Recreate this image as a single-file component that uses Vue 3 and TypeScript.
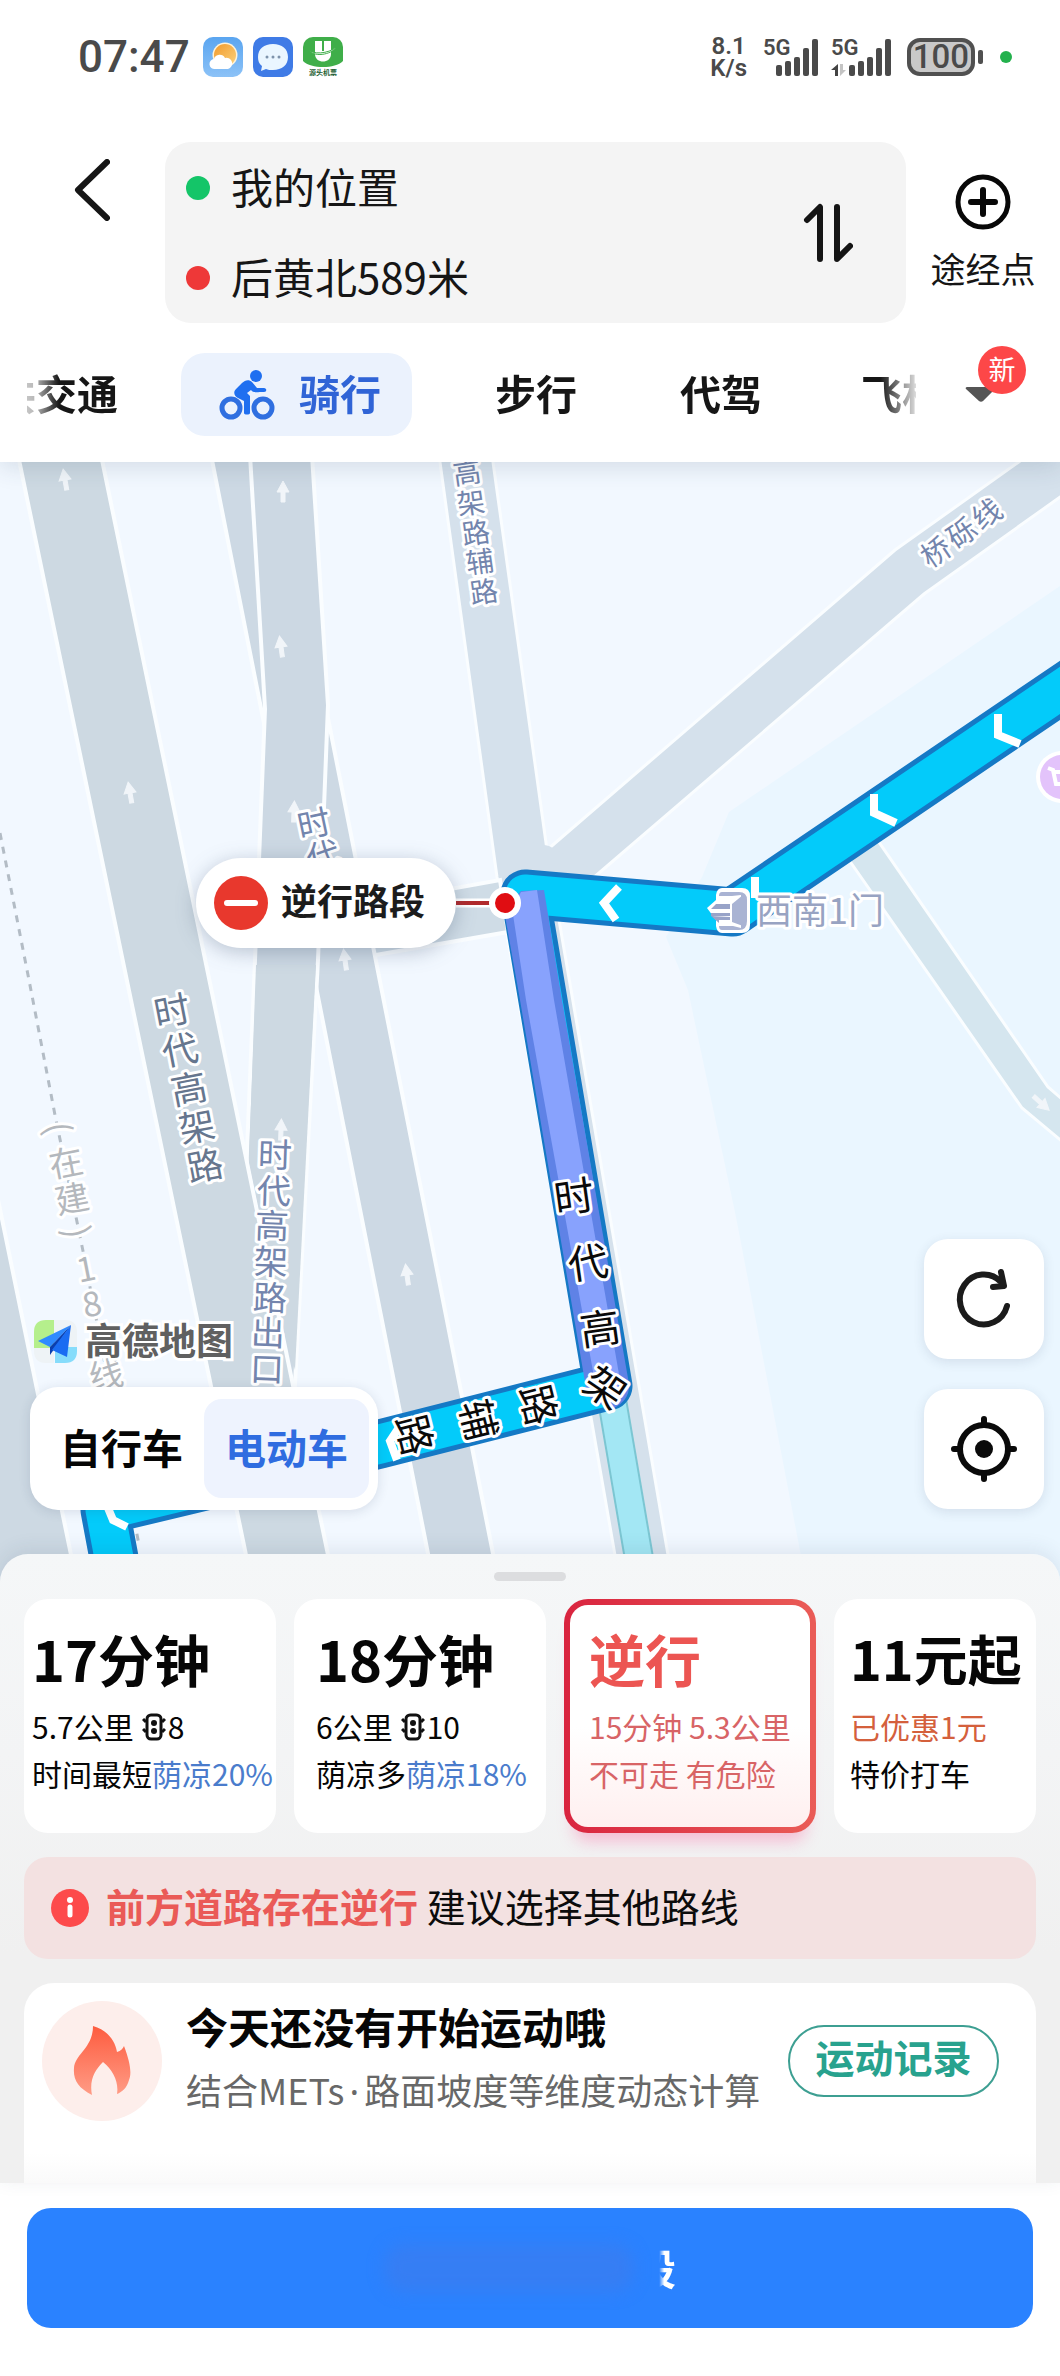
<script setup lang="ts">
import { ref } from 'vue'

interface Glyph {
  t: string
  x: number
  y: number
  r: number
}

interface Label {
  kind: string
  size: number
  glyphs: Glyph[]
}

const spread = (
  text: string,
  from: [number, number],
  to: [number, number],
  r: number,
): Glyph[] => {
  const chars = Array.from(text)
  const n = Math.max(chars.length - 1, 1)
  return chars.map((t, i) => ({
    t,
    x: Math.round(from[0] + ((to[0] - from[0]) * i) / n),
    y: Math.round(from[1] + ((to[1] - from[1]) * i) / n),
    r,
  }))
}

const labels: Label[] = [
  { kind: 'side', size: 28, glyphs: spread('高架路辅路', [467, 473], [484, 592], -8) },
  { kind: 'side', size: 29, glyphs: spread('桥砾线', [936, 552], [987, 514], -34) },
  { kind: 'side', size: 33, glyphs: spread('时代', [314, 824], [323, 856], -12) },
  { kind: 'main', size: 36, glyphs: spread('时代高架路', [172, 1011], [205, 1166], -11) },
  { kind: 'side', size: 34, glyphs: spread('时代高架路出口', [275, 1155], [267, 1369], 2) },
  {
    kind: 'planned',
    size: 34,
    glyphs: [
      { t: '(', x: 58, y: 1128, r: 79 },
      { t: '在', x: 66, y: 1163, r: -11 },
      { t: '建', x: 72, y: 1199, r: -11 },
      { t: ')', x: 77, y: 1232, r: 79 },
      { t: '1', x: 86, y: 1269, r: -11 },
      { t: '8', x: 92, y: 1304, r: -11 },
      { t: '线', x: 106, y: 1375, r: -11 },
    ],
  },
  {
    kind: 'route',
    size: 40,
    glyphs: [
      { t: '时', x: 574, y: 1197, r: -8 },
      { t: '代', x: 588, y: 1263, r: -8 },
      { t: '高', x: 600, y: 1329, r: -8 },
      { t: '架', x: 605, y: 1388, r: 34 },
      { t: '路', x: 538, y: 1405, r: 76 },
      { t: '辅', x: 478, y: 1420, r: 76 },
      { t: '路', x: 414, y: 1435, r: 76 },
    ],
  },
]

const arrows: [number, number, number][] = [
  [65, 480, -10],
  [283, 492, 0],
  [281, 647, -8],
  [130, 793, -10],
  [294, 812, 2],
  [345, 960, -8],
  [281, 1130, 2],
  [407, 1275, -8],
  [1041, 1103, 132],
]

const tabs = ['骑行', '步行', '代驾']
const activeTab = ref('骑行')
const vehicles = ['自行车', '电动车']
const vehicle = ref('电动车')
const bars = [11, 15, 19, 28, 37]

interface Plan {
  id: string
  title: string
  line: string
  lights?: string
  note: string
  shade?: string
}

const plans: Plan[] = [
  { id: 'fast', title: '17分钟', line: '5.7公里', lights: '8', note: '时间最短', shade: '荫凉20%' },
  { id: 'shade', title: '18分钟', line: '6公里', lights: '10', note: '荫凉多', shade: '荫凉18%' },
  { id: 'wrong', title: '逆行', line: '15分钟 5.3公里', note: '不可走 有危险' },
  { id: 'taxi', title: '11元起', line: '已优惠1元', note: '特价打车' },
]
const plan = ref('wrong')
</script>

<template>
  <div class="page">
    <header class="top">
      <div class="status">
        <div class="status-left">
          <span class="clock">07:47</span>
          <svg class="app" viewBox="0 0 40 40" aria-hidden="true">
            <defs>
              <linearGradient id="sky" x1="0" y1="0" x2="0" y2="1">
                <stop offset="0" stop-color="#5aa5f0" />
                <stop offset="1" stop-color="#8cc2f7" />
              </linearGradient>
              <linearGradient id="sun" x1="0" y1="0" x2="1" y2="1">
                <stop offset="0" stop-color="#f19a2c" />
                <stop offset="1" stop-color="#fbd27c" />
              </linearGradient>
            </defs>
            <rect width="40" height="40" rx="10" fill="url(#sky)" />
            <circle cx="22" cy="18" r="12.500" fill="#fff3d8" />
            <circle cx="22" cy="18" r="11" fill="url(#sun)" />
            <path d="M12 32a5 5 0 0 1-1-10 6 6 0 0 1 11-1 5.500 5.500 0 0 1 3 11z" fill="#fff" />
          </svg>
          <svg class="app" viewBox="0 0 40 40" aria-hidden="true">
            <rect width="40" height="40" rx="10" fill="#3f7be6" />
            <path d="M20 7c9 0 15 5 15 13s-6 13-15 13c-3 0-5 0-7-1l-5 2 1-5c-3-2-4-5-4-9C5 12 11 7 20 7z" fill="#eaf6ff" />
            <g fill="#7e93ab">
              <circle cx="14" cy="20" r="1.500" />
              <circle cx="20" cy="20" r="1.500" />
              <circle cx="26" cy="20" r="1.500" />
            </g>
          </svg>
          <svg class="app" viewBox="0 0 40 40" aria-hidden="true">
            <path d="M0 10A10 10 0 0 1 10 0h20a10 10 0 0 1 10 10v14c-8 8-32 8-40 0z" fill="#3fae49" />
            <path d="M12 4h7v10h2V4h7v13c0 10-16 10-16 0z" fill="#fff" />
            <path d="M6 12c2 6 20 5 27-2-4 8-24 11-27 2z" fill="#fff" stroke="#3fae49" stroke-width="1" />
            <text x="20" y="38" text-anchor="middle" class="app-name">源头机票</text>
          </svg>
        </div>
        <div class="status-right">
          <div class="speed">8.1<br />K/s</div>
          <div v-for="sim in 2" :key="sim" class="signal">
            <span class="gen">5G</span>
            <svg v-if="sim === 2" class="updown" viewBox="0 0 15 12" aria-hidden="true">
              <path d="M7 0v12H4V6H0z" fill="#444" />
              <path d="M9 0v12l6-6h-3V0z" fill="#c4c4c4" />
            </svg>
            <svg class="bars" viewBox="0 0 43 38" aria-hidden="true">
              <rect v-for="(h, i) in bars" :key="i" :x="i * 9" :y="38 - h" width="6" :height="h" rx="2" fill="#4a4a4a" />
            </svg>
          </div>
          <div class="battery"><span>100</span></div>
          <i class="live"></i>
        </div>
      </div>

      <div class="search-row">
        <button class="back" type="button" aria-label="返回">
          <svg width="36" height="62" viewBox="0 0 36 62">
            <path d="M33 3 4 31l29 28" fill="none" stroke="#161616" stroke-width="6" stroke-linecap="round" stroke-linejoin="round" />
          </svg>
        </button>
        <div class="places">
          <div class="place-list">
            <button class="place" type="button"><i class="dot start"></i><span>我的位置</span></button>
            <button class="place" type="button"><i class="dot end"></i><span>后黄北589米</span></button>
          </div>
          <button class="swap" type="button" aria-label="交换">
            <svg width="50" height="60" viewBox="0 0 50 60">
              <path d="M4 17 17 4v52M34 4v52l13-13" fill="none" stroke="#141414" stroke-width="6" stroke-linecap="round" stroke-linejoin="round" />
            </svg>
          </button>
        </div>
        <button class="via" type="button">
          <svg width="58" height="58" viewBox="0 0 58 58" aria-hidden="true">
            <circle cx="29" cy="29" r="25" fill="none" stroke="#080808" stroke-width="5" />
            <path d="M29 17v24M17 29h24" stroke="#080808" stroke-width="6" stroke-linecap="round" />
          </svg>
          途经点
        </button>
      </div>

      <div class="tab-row">
        <nav class="tabs">
          <button class="tab first" type="button"><span>公共交通</span></button>
          <button
            v-for="t in tabs"
            :key="t"
            class="tab"
            :class="{ on: t === activeTab }"
            type="button"
            @click="activeTab = t"
          >
            <svg v-if="t === '骑行'" width="56" height="50" viewBox="0 0 56 50" aria-hidden="true">
              <g fill="none" stroke="#2f6fe0" stroke-width="5">
                <circle cx="12" cy="38" r="9" />
                <circle cx="44" cy="38" r="9" />
              </g>
              <circle cx="37" cy="6" r="6" fill="#1f6ff0" />
              <path d="M33 12c-3-3-7-2-10 1l-6 6c-3 3-2 7 2 9l6 3v12c0 2 6 2 6 0V26l-3-3 4-3c2 3 5 2 13 2 3 0 3-4 0-4h-7z" fill="#1f6ff0" />
            </svg>
            <span>{{ t }}</span>
          </button>
          <button class="tab last" type="button"><span>飞机</span></button>
        </nav>
        <button class="more" type="button" aria-label="更多">
          <svg width="32" height="18" viewBox="0 0 32 18"><path d="M2 1h28c1 0 1 1 0 2L18 15c-1 1-3 1-4 0L1 3c-1-1 0-2 1-2z" fill="#555" /></svg>
          <span class="badge">新</span>
        </button>
      </div>
    </header>

    <main class="map">
      <svg class="canvas" viewBox="0 462 1060 1120" preserveAspectRatio="xMidYMid slice">
        <rect x="0" y="462" width="1060" height="1120" fill="#f2f8ff" />
        <path d="M1060 586 729 812 702 877 666 937 688 990 736 1217 806 1582H1060z" fill="#eaf6ff" />

        <g class="roads">
          <path class="light" d="M849 860 1022 1108 1070 1148V1106L1048 1087 876 838z" fill="#d5e6ef" />
          <path class="light" d="M547 850 895 550 1030 454H1070V490L924 594 599 873 560 905z" fill="#d5e1ec" />
          <path class="light" d="M439 455 497 877 620 1584H673L547 850 492 455z" fill="#d5e1ec" />
          <path class="bare" d="M522 840 549 846 597 872 560 900 510 890z" fill="#d5e1ec" />
          <path d="M350 907 500 880 508 932 370 956z" fill="#cfdce6" />
          <path d="M211 455H276L499 1584H434z" fill="#cdd9e4" />
          <path d="M-5 1185 77 1584H-5z" fill="#cdd9e3" />
          <path d="M250 455H312L328 705 318 960 293 1420 240 1420 247 1151 255 960 265 709z" fill="#ccd8e3" />
          <path d="M18 455H101L334 1584H252z" fill="#cdd9e2" />
          <path d="M249 1160 256 965 316 965 295 1370 284 1330z" class="bare" fill="#cdd9e2" />
        </g>

        <g class="oneway">
          <path
            v-for="([x, y, r], i) in arrows"
            :key="i"
            :transform="`translate(${x} ${y}) rotate(${r})`"
            d="M0-11 6 0H2V10H-2V0H-6z"
          />
        </g>
        <path d="M0 833 29 980 55 1115 83 1251 110 1390 139 1545" fill="none" stroke="#b3bcc5" stroke-width="3" stroke-dasharray="7 7" />

        <path d="M612 1400 643 1582" stroke="#7cc6d2" stroke-width="30" />
        <path d="M612 1400 643 1582" stroke="#a3e7f4" stroke-width="26" />
        <g fill="none" stroke-linejoin="round" stroke-linecap="round">
          <path d="M1090 670 733 912 525 894 608 1386 380 1444 105 1510 120 1590" stroke="#1579c5" stroke-width="49" />
          <path d="M1090 670 733 912 525 894 608 1386 380 1444 105 1510 120 1590" stroke="#03cbfa" stroke-width="39" />
        </g>
        <path d="M504 910 521 891 544 890 562 1000 629 1384Q630 1400 614 1408L592 1402 586 1388 520 1000z" fill="#5f82e6" />
        <path d="M512 908 521 892 537 890 554 1000 620 1380Q618 1392 608 1394L596 1388 526 1000z" fill="#88a2fd" />
        <g class="chevrons">
          <path d="M998 714V735L1020 744M874 794V813L896 823M755 877V898M619 887 604 903 616 920M108 1508 113 1520 127 1527M400 1426 390 1441 397 1460" />
        </g>

        <g v-for="(l, i) in labels" :key="i" :class="['lbl', l.kind]" :font-size="l.size">
          <text
            v-for="(g, k) in l.glyphs"
            :key="k"
            :transform="`translate(${g.x} ${g.y}) rotate(${g.r})`"
            dy=".36em"
          >{{ g.t }}</text>
        </g>

        <g>
          <path d="M722 888h20q8 0 8 8v29q0 8-8 8h-20q-5 0-6-7v-6l-9-12 9-8v-5q1-7 6-7z" fill="#fff" />
          <path d="M722 892h17q8 0 8 8v21q0 9-8 9h-17q-3 0-3-4h14l8 2v-33l-9 1h-13q0-4 3-4z" fill="#a9b3d3" />
          <path d="M732 904 743 895V926L732 922z" fill="#a9b3d3" />
          <path d="M711 909l5-5h14v5zM711 913h19v3h-19zM711 916l8 7v-3h11v-3z" fill="#98a3c8" />
          <text x="756" y="924" class="lbl poi">西南1门</text>
        </g>
        <circle cx="1062" cy="777" r="26" fill="#fff" />
        <circle cx="1062" cy="777" r="22" fill="#e3c3fb" />
        <path d="M1048 768l5 2 3 14h14M1054 772h14" fill="none" stroke="#fff" stroke-width="4" />

        <g class="callout">
          <path d="M456 903H500" stroke="#fff" stroke-width="9" />
          <path d="M456 903H500" stroke="#b02a2c" stroke-width="4" />
          <circle cx="505" cy="903" r="16" fill="#fff" />
          <circle cx="505" cy="903" r="10" fill="#e00d12" />
          <rect x="196" y="858" width="260" height="90" rx="45" fill="#fff" class="bubble" />
          <circle cx="241" cy="903" r="27" fill="#e8382d" />
          <path d="M227 903H255" stroke="#fff" stroke-width="6" stroke-linecap="round" />
          <text x="281" y="915">逆行路段</text>
        </g>

        <g class="brand">
          <path d="M34 1332q0-12 12-12h8v28H34z" fill="#b5ef8c" />
          <path d="M54 1320h11q12 0 12 12v15H54z" fill="#eef3f6" />
          <path d="M34 1348h20v15h-8q-12 0-12-12z" fill="#eef3f6" />
          <path d="M55 1347h22v4q0 12-12 12H55z" fill="#86dcfb" />
          <path d="M71 1325 38 1341 50 1347z" fill="#2f8bff" />
          <path d="M71 1325 50 1347 50 1355z" fill="#0b3fae" />
          <path d="M71 1325 52 1350 67 1357z" fill="#1a6cf2" />
          <text x="85" y="1355">高德地图</text>
        </g>
      </svg>

      <div class="vehicles">
        <button
          v-for="v in vehicles"
          :key="v"
          type="button"
          :class="{ on: v === vehicle }"
          @click="vehicle = v"
        >{{ v }}</button>
      </div>

      <div class="tools">
        <button type="button" aria-label="刷新">
          <svg width="64" height="64" viewBox="0 0 64 64">
            <path d="M55 39a24 25 0 1 1-6-24" fill="none" stroke="#1b1b1b" stroke-width="6" stroke-linecap="round" />
            <path d="M49 5l3 14-11 1" fill="none" stroke="#1b1b1b" stroke-width="6" stroke-linecap="round" stroke-linejoin="round" />
          </svg>
        </button>
        <button type="button" aria-label="定位">
          <svg width="70" height="70" viewBox="0 0 70 70">
            <circle cx="35" cy="35" r="24" fill="none" stroke="#0a0a0a" stroke-width="6" />
            <circle cx="35" cy="35" r="9" fill="#0a0a0a" />
            <path d="M35 5v6M35 59v6M5 35h6M59 35h6" stroke="#0a0a0a" stroke-width="6" stroke-linecap="round" />
          </svg>
        </button>
      </div>
    </main>

    <section class="sheet">
      <i class="handle"></i>
      <div class="plans">
        <button
          v-for="p in plans"
          :key="p.id"
          type="button"
          :class="['plan', p.id, { picked: p.id === plan }]"
          @click="plan = p.id"
        >
          <strong>{{ p.title }}</strong>
          <span class="line">
            {{ p.line }}
            <template v-if="p.lights">
              <svg width="24" height="28" viewBox="0 0 24 28" aria-hidden="true">
                <rect x="5" y="2" width="14" height="24" rx="4" fill="none" stroke="#111" stroke-width="3" />
                <circle cx="12" cy="10" r="3" fill="#111" />
                <circle cx="12" cy="18" r="3" fill="#111" />
                <path d="M1 6l3 3M1 16l3 3M23 6l-3 3M23 16l-3 3" stroke="#111" stroke-width="3" />
              </svg>{{ p.lights }}
            </template>
          </span>
          <span class="line note">{{ p.note }}<em v-if="p.shade">{{ p.shade }}</em></span>
        </button>
      </div>

      <div class="alert" role="alert">
        <svg width="40" height="40" viewBox="0 0 40 40" aria-hidden="true">
          <circle cx="20" cy="20" r="19" fill="#fd4a4b" />
          <circle cx="20" cy="12" r="3" fill="#fff" />
          <path d="M20 19v8" stroke="#fff" stroke-width="5" stroke-linecap="round" />
        </svg>
        <p><b>前方道路存在逆行</b> 建议选择其他路线</p>
      </div>

      <div class="sport">
        <div class="flame">
          <svg width="58" height="70" viewBox="0 0 58 70" aria-hidden="true">
            <defs>
              <linearGradient id="fire" x1="0" y1="0" x2="0" y2="1">
                <stop offset="0" stop-color="#fd5c3f" />
                <stop offset="1" stop-color="#ff9c86" />
              </linearGradient>
            </defs>
            <path d="M20 0c14 4 22 14 24 26 4-1 6-4 7-6 6 16 8 27 5 34-2 8-7 12-12 14 2-12-4-24-14-32C22 44 16 54 19 69 5 62 0 54 1 42 2 28 20 22 20 0z" fill="url(#fire)" />
          </svg>
        </div>
        <div class="sport-text">
          <h2>今天还没有开始运动哦</h2>
          <p>结合METs<span>·</span>路面坡度等维度动态计算</p>
        </div>
        <button type="button">运动记录</button>
      </div>
    </section>

    <footer class="bottom">
      <button type="button"><i class="smudge"></i><span>段</span></button>
    </footer>
  </div>
</template>

<style>
body {
  background: #fff;
}
</style>

<style scoped>
.page {
  font-family: "Noto Sans CJK SC", "Noto Sans", sans-serif;
  color: #161616;
  background: #fff;
  overflow: hidden;
}
button {
  font: inherit;
  color: inherit;
  background: none;
  border: 0;
  padding: 0;
  margin: 0;
  cursor: pointer;
  white-space: nowrap;
}
svg {
  display: block;
  flex: none;
}

.top {
  position: relative;
  z-index: 2;
  background: #fff;
  box-shadow: 0 4px 24px rgba(40, 60, 90, 0.16);
  padding-bottom: 26px;
}
.status {
  height: 114px;
  display: flex;
  align-items: center;
  justify-content: space-between;
  padding: 0 48px 0 78px;
  color: #4a4a4a;
}
.status-left {
  display: flex;
  align-items: center;
  gap: 10px;
}
.clock {
  font: 500 44px/44px Roboto, sans-serif;
  margin-right: 3px;
}
.app {
  width: 40px;
  height: 40px;
}
.app-name {
  font-size: 7px;
  font-weight: 700;
  fill: #1c5e33;
}
.status-right {
  display: flex;
  align-items: center;
  font-family: Roboto, sans-serif;
}
.speed {
  text-align: center;
  font-size: 24px;
  line-height: 22px;
  font-weight: 600;
  margin-right: 16px;
}
.signal {
  position: relative;
  width: 56px;
  height: 38px;
  display: flex;
  justify-content: flex-end;
  margin-right: 12px;
}
.signal + .signal {
  width: 61px;
  margin-right: 15px;
}
.bars {
  width: 43px;
  height: 38px;
}
.gen {
  position: absolute;
  left: 0;
  top: 0;
  font-size: 22px;
  line-height: 20px;
  font-weight: 600;
}
.updown {
  position: absolute;
  left: 0;
  bottom: 0;
  width: 15px;
  height: 12px;
}
.battery {
  position: relative;
  width: 68px;
  height: 38px;
  box-sizing: border-box;
  border: 4px solid #505050;
  border-radius: 13px;
  background: #c9c9c9;
  margin-right: 25px;
  display: flex;
  align-items: center;
  justify-content: center;
  font-size: 33px;
  line-height: 30px;
  font-weight: 500;
}
.battery::after {
  content: "";
  position: absolute;
  right: -12px;
  top: 8px;
  width: 5px;
  height: 14px;
  border-radius: 2px;
  background: #505050;
}
.live {
  width: 12px;
  height: 12px;
  border-radius: 50%;
  background: #23b14d;
}

.search-row {
  display: flex;
  align-items: flex-start;
  margin-top: 28px;
}
.back {
  width: 165px;
  height: 96px;
  padding-left: 18px;
  display: flex;
  align-items: center;
  justify-content: center;
}
.places {
  flex: 1;
  min-width: 0;
  display: flex;
  align-items: center;
  justify-content: space-between;
  height: 181px;
  box-sizing: border-box;
  padding: 0 53px 0 21px;
  border-radius: 26px;
  background: #f4f4f4;
}
.place-list {
  display: flex;
  flex-direction: column;
}
.place {
  display: flex;
  align-items: center;
  gap: 21px;
  height: 90px;
  font-size: 42px;
}
.place span,
.tab span {
  padding-bottom: 5px;
}
.dot {
  width: 24px;
  height: 24px;
  border-radius: 50%;
}
.start {
  background: #14c568;
}
.end {
  background: #ee3838;
}
.via {
  width: 154px;
  padding-top: 31px;
  display: flex;
  flex-direction: column;
  align-items: center;
  gap: 11px;
  font-size: 35px;
  line-height: 52px;
}

.tab-row {
  display: flex;
  align-items: center;
  margin-top: 30px;
  padding-left: 27px;
}
.tabs {
  flex: 1;
  min-width: 0;
  display: flex;
  align-items: center;
  gap: 63px;
  overflow: hidden;
  mask-image: linear-gradient(90deg, rgba(0, 0, 0, 0.25) 0, rgba(0, 0, 0, 0.3) 8px, #000 32px, #000 calc(100% - 36px), rgba(0, 0, 0, 0.15) 100%);
}
.tab {
  height: 83px;
  padding: 0 20px;
  font-size: 41px;
  font-weight: 700;
  flex: none;
  display: flex;
  align-items: center;
}
.tab.on {
  gap: 24px;
  padding: 0 31px 0 38px;
  border-radius: 24px;
  background: #ebf2fd;
  color: #3064d6;
}
.tab.first {
  width: 91px;
  padding: 0;
  overflow: hidden;
  justify-content: flex-end;
}
.tab.last {
  flex: 1;
  min-width: 0;
  padding: 0 0 0 16px;
  overflow: hidden;
}
.more {
  position: relative;
  width: 144px;
  height: 83px;
  padding-left: 49px;
  display: flex;
  align-items: center;
}
.badge {
  position: absolute;
  left: 62px;
  top: -7px;
  width: 48px;
  height: 48px;
  border-radius: 50%;
  background: #fd4748;
  color: #fff;
  font-size: 27px;
  line-height: 46px;
  text-align: center;
}

.map {
  position: relative;
  height: 1120px;
  background: #f2f8ff;
}
.canvas {
  width: 100%;
  height: 100%;
}
.roads path {
  stroke: #fafdff;
  stroke-width: 4;
}
.roads .light {
  stroke-width: 3;
}
.roads .bare {
  stroke: none;
}
.oneway path {
  fill: #f1f5f9;
  stroke: #f1f5f9;
  stroke-width: 1;
}
.chevrons path {
  fill: none;
  stroke: #fff;
  stroke-width: 8;
}
.lbl {
  stroke: #fff;
  stroke-width: 6;
  stroke-linejoin: round;
  paint-order: stroke;
}
g.lbl {
  text-anchor: middle;
}
.side {
  fill: #7385ad;
}
.main {
  fill: #66768e;
}
.planned {
  fill: #b4b8bd;
}
.route {
  fill: #0a0a0a;
}
.poi {
  font-size: 36px;
  fill: #98a3c2;
}
.bubble {
  filter: drop-shadow(0 4px 10px rgba(50, 70, 100, 0.3));
}
.callout text {
  font-size: 36px;
  font-weight: 700;
  fill: #1c1c1c;
}
.brand text {
  font-size: 37px;
  font-weight: 700;
  fill: #606060;
  stroke: #fff;
  stroke-width: 6;
  paint-order: stroke;
}

.vehicles {
  position: absolute;
  left: 30px;
  bottom: 72px;
  display: flex;
  width: 348px;
  height: 123px;
  box-sizing: border-box;
  padding: 12px 9px;
  border-radius: 28px;
  background: #fff;
  box-shadow: 0 2px 12px rgba(40, 60, 90, 0.14);
  font-size: 41px;
  font-weight: 700;
  color: #050505;
}
.vehicles button {
  flex: 1;
  padding-bottom: 5px;
  border-radius: 18px;
}
.vehicles .on {
  background: #eef3fe;
  color: #2f6ce0;
}
.tools {
  position: absolute;
  right: 16px;
  bottom: 73px;
  display: flex;
  flex-direction: column;
  gap: 30px;
}
.tools button {
  width: 120px;
  height: 120px;
  border-radius: 24px;
  background: #fff;
  box-shadow: 0 3px 12px rgba(40, 60, 90, 0.12);
  display: flex;
  align-items: center;
  justify-content: center;
}

.sheet {
  position: relative;
  margin-top: -28px;
  padding: 18px 24px 0;
  border-radius: 28px 28px 0 0;
  background: linear-gradient(#f5f7f8 0, #f3f4f5 200px, #f0f0f0 400px);
  box-shadow: 0 -4px 20px rgba(40, 60, 90, 0.1);
}
.handle {
  display: block;
  width: 72px;
  height: 9px;
  margin: 0 auto;
  border-radius: 5px;
  background: #dcdddf;
}
.plans {
  display: flex;
  gap: 18px;
  margin-top: 18px;
}
.plan {
  flex: 1 1 252px;
  min-width: 0;
  height: 234px;
  box-sizing: border-box;
  padding: 22px 0 0 22px;
  border-radius: 24px;
  background: #fff;
  color: #060606;
  text-align: left;
  display: flex;
  flex-direction: column;
}
.plan strong {
  font-size: 56px;
  line-height: 74px;
  font-weight: 700;
  margin-bottom: 8px;
}
.line {
  display: flex;
  align-items: center;
  gap: 2px;
  font-size: 30px;
  line-height: 47px;
}
.line svg {
  margin-left: 6px;
}
.note {
  gap: 0;
}
.line em {
  font-style: normal;
  color: #4a7ccc;
}
.plan.fast {
  padding-left: 8px;
}
.plan.taxi {
  flex-basis: 202px;
  padding-left: 16px;
}
.plan.taxi strong {
  font-size: 54px;
}
.plan.taxi .line {
  color: #d4603c;
}
.plan.taxi .note {
  color: #060606;
}
.plan.picked {
  padding: 16px 0 0 19px;
  border: 6px solid transparent;
  background:
    linear-gradient(#fff 55%, #ffefef) padding-box,
    linear-gradient(90deg, #d9243f, #ea5c57) border-box;
  box-shadow: 0 18px 16px -10px rgba(250, 120, 170, 0.45);
}
.plan.wrong strong {
  color: #ec5552;
}
.plan.wrong .line {
  color: #d86466;
}

.alert {
  display: flex;
  align-items: center;
  gap: 16px;
  height: 102px;
  margin-top: 24px;
  padding-left: 26px;
  border-radius: 24px;
  background: #f3e1e1;
  font-size: 39px;
  color: #0c0c0c;
}
.alert p {
  margin: 0;
  padding-bottom: 7px;
  white-space: nowrap;
}
.alert b {
  font-weight: 700;
  color: #ea5a57;
}

.sport {
  display: flex;
  align-items: flex-start;
  height: 200px;
  box-sizing: border-box;
  margin-top: 24px;
  padding: 18px 37px 0 18px;
  border-radius: 30px 30px 0 0;
  background: linear-gradient(#fff 170px, #fafafa);
}
.flame {
  width: 120px;
  height: 120px;
  border-radius: 50%;
  background: #fdeeeb;
  display: flex;
  align-items: center;
  justify-content: center;
}
.sport-text {
  flex: 1;
  min-width: 0;
  padding-left: 24px;
  white-space: nowrap;
}
.sport h2 {
  margin: 0;
  font-size: 42px;
  line-height: 50px;
  font-weight: 700;
  color: #060606;
}
.sport p {
  margin: 12px 0 0;
  font-size: 36px;
  line-height: 52px;
  color: #686868;
}
.sport p span {
  font-family: "Noto Sans", sans-serif;
  padding: 0 5px;
}
.sport button {
  width: 211px;
  height: 72px;
  margin-top: 24px;
  padding-bottom: 10px;
  border: 2px solid #3d9f92;
  border-radius: 36px;
  color: #28a28e;
  font-size: 39px;
  line-height: 56px;
  font-weight: 700;
}

.bottom {
  padding: 25px 27px 48px;
  background: #fff;
}
.bottom button {
  display: flex;
  align-items: center;
  justify-content: center;
  width: 100%;
  height: 120px;
  border-radius: 24px;
  background: #2a82ff;
  color: #fff;
  font-size: 42px;
  font-weight: 700;
}
.smudge {
  width: 250px;
  height: 48px;
  border-radius: 20px;
  background: rgba(62, 124, 236, 0.6);
  filter: blur(8px);
}
.bottom span {
  padding-bottom: 4px;
  mask-image: linear-gradient(90deg, transparent 60%, #000 72%);
}
</style>
